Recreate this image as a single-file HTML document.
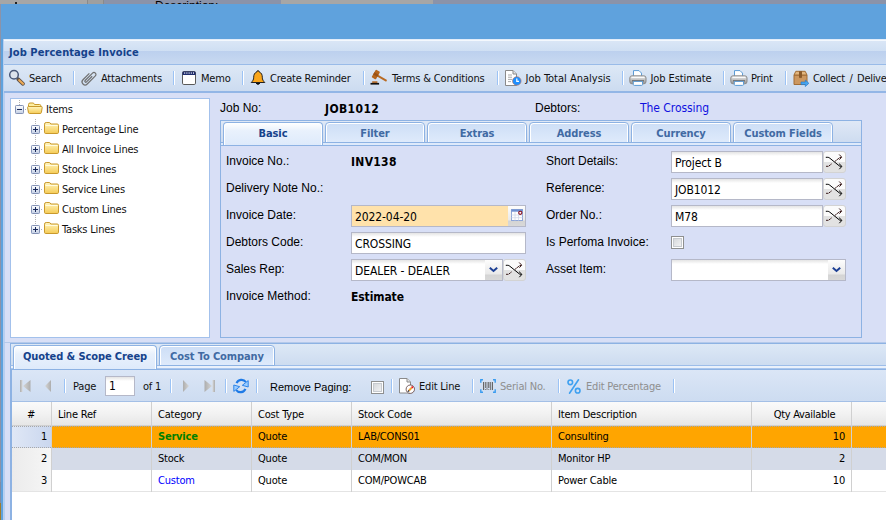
<!DOCTYPE html>
<html><head><meta charset="utf-8"><title>Job Percentage Invoice</title>
<style>
*{box-sizing:border-box;margin:0;padding:0}
html,body{width:886px;height:520px;overflow:hidden}
body{position:relative;background:#5fa2dd;font-family:"DejaVu Sans Condensed","DejaVu Sans",sans-serif;font-size:11px;color:#111;letter-spacing:-0.2px}
div,span,svg{position:absolute;white-space:nowrap}
svg{overflow:visible}
.a{font-family:"Liberation Sans",sans-serif;font-size:12px;letter-spacing:0;line-height:14px;height:14px;color:#000}
.t{line-height:13px;height:13px}
.b{font-weight:bold}
.sep{width:2px;height:14px;border-left:1px solid #9cc3f5;border-right:1px solid #fff;top:71px}
.tab{top:122px;height:21px;width:100px;border:1px solid #8db2e3;border-radius:4px 4px 0 0;background:linear-gradient(#cddef6,#deeafb);box-shadow:inset 1px 1px 0 #fff,inset -1px 0 0 #fff;color:#416aa3;font-weight:bold;text-align:center;line-height:21px;letter-spacing:-0.1px}
.tab.on{height:23px;border-bottom:none;background:linear-gradient(#fff,#e9f1fc 35%,#deeafb);color:#15428b}
.inp{height:22px;border:1px solid #b5b8c8;background:linear-gradient(#e4e4e4,#fff 4px);background-color:#fff;font-size:12px;line-height:22.5px;padding-left:3px;color:#000;letter-spacing:-0.1px}
.trg{width:17px;height:22px;border:1px solid #b5b8c8;border-left:none;background:linear-gradient(#fdfdfd,#e9e9e9 70%,#d4d4d4 75%,#d8d8d8)}
.shf{width:23px;height:22px;border:1px solid #d3d3d3;border-radius:3px;background:linear-gradient(#fbfbfb 50%,#e2e2e2 50%)}
.chk{width:13px;height:13px;border:1px solid #8e8f8f;background:linear-gradient(135deg,#cfd2d6,#f8f8f8);box-shadow:inset 0 0 0 1px #fff,inset 0 0 0 2px #c6cacf}
.hd{top:402px;height:23px;line-height:26px;color:#000}
.cell{height:22px;line-height:23px;color:#000}
</style></head><body>
<svg width="0" height="0" style="left:0;top:0"><defs>
<linearGradient id="gF" x1="0" y1="0" x2="0" y2="1"><stop offset="0" stop-color="#fff6c0"/><stop offset="1" stop-color="#f5cb55"/></linearGradient>
<linearGradient id="gB" x1="0" y1="0" x2="0" y2="1"><stop offset="0" stop-color="#ffffff"/><stop offset="1" stop-color="#c3cfe4"/></linearGradient>
<linearGradient id="gP" x1="0" y1="0" x2="0" y2="1"><stop offset="0" stop-color="#f0f0f0"/><stop offset="1" stop-color="#8f8f8f"/></linearGradient>
<linearGradient id="gN" x1="0" y1="0" x2="1" y2="0"><stop offset="0" stop-color="#adadad"/><stop offset="1" stop-color="#d6d6d6"/></linearGradient>
<linearGradient id="gN2" x1="1" y1="0" x2="0" y2="0"><stop offset="0" stop-color="#adadad"/><stop offset="1" stop-color="#d6d6d6"/></linearGradient>
<linearGradient id="gR" x1="0" y1="0" x2="0" y2="1"><stop offset="0" stop-color="#6ab4ff"/><stop offset="1" stop-color="#1f6fdc"/></linearGradient>
</defs></svg>
<div style="left:0;top:0;width:886px;height:4px;background:#8b93a9;overflow:hidden">
<div style="left:0;top:0;width:87px;height:4px;background:#a6a6a6"></div>
<div style="left:87px;top:0;width:17px;height:4px;background:#9f9f9f;border-left:1px solid #8a8a8a;border-right:1px solid #8a8a8a"></div>
<div style="left:281px;top:0;width:152px;height:4px;background:#a6a6a6"></div>
<div class="a" style="left:155px;top:-1px;color:#000">Description:</div>
<div style="left:15px;top:2px;width:2px;height:2px;background:#222"></div>
</div>
<div style="left:0;top:4px;width:1px;height:516px;background:linear-gradient(#8b93a9 0,#8b93a9 478px,#7f8ca5 478px,#7f8ca5 499px,#a07c2c 499px)"></div>
<div style="left:3px;top:39px;width:890px;height:490px;background:#d8dff6;border-left:2px solid #b9cff0"></div>
<div style="left:4px;top:39px;width:882px;height:25px;background:linear-gradient(#cfe0f5 0,#f4f8fd 1px,#f4f8fd 2px,#dae6f6 2px,#cfdff3 12px,#bcd0ee 12px,#c8d9f1 25px)"></div>
<div style="left:4px;top:64px;width:882px;height:1px;background:#99bbe8"></div>
<div class="t b" style="left:9px;top:46px;color:#15428b;letter-spacing:0.08px">Job Percentage Invoice</div>
<div style="left:4px;top:65px;width:882px;height:28px;background:linear-gradient(#dde8f6,#ccdbf0);border-bottom:2px solid #93b6e6"></div>
<svg style="left:9px;top:70px" width="16" height="16" viewBox="0 0 16 16"><line x1="9.3" y1="9.3" x2="14" y2="13.8" stroke="#5f5248" stroke-width="3.8" stroke-linecap="round"/><line x1="10.2" y1="10.2" x2="14" y2="13.8" stroke="#eeaa55" stroke-width="2.1" stroke-linecap="round"/><circle cx="5" cy="4.8" r="4.3" fill="#dde3ec" stroke="#4a5878" stroke-width="1.5"/></svg><div class="t" style="left:29px;top:72px;">Search</div><div class="sep" style="left:73px;top:71px"></div>
<svg style="left:81px;top:70px" width="16" height="16" viewBox="0 0 16 16"><g transform="rotate(45 8 8)" fill="none" stroke="#707070" stroke-width="1.2"><path d="M5,4.5 v9 a3,3 0 0 0 6,0 v-11.5 a2,2 0 0 0 -4,0 v10.5 a1,1 0 0 0 2,0 v-8"/></g></svg><div class="t" style="left:101px;top:72px;">Attachments</div><div class="sep" style="left:173px;top:71px"></div>
<svg style="left:181px;top:70px" width="16" height="16" viewBox="0 0 16 16"><rect x="1.5" y="1.5" width="13" height="13" rx="1.3" fill="#fff" stroke="#5a5a5a"/><path d="M1.5,2.8 q0,-1.3 1.3,-1.3 h10.4 q1.3,0 1.3,1.3 v2.2 h-13z" fill="#1e2d6e"/><rect x="3.2" y="2.4" width="1" height="1.3" fill="#fff"/><rect x="5.4" y="2.4" width="1" height="1.3" fill="#fff"/><rect x="7.6000000000000005" y="2.4" width="1" height="1.3" fill="#fff"/><rect x="9.8" y="2.4" width="1" height="1.3" fill="#fff"/><rect x="12.0" y="2.4" width="1" height="1.3" fill="#fff"/></svg><div class="t" style="left:201px;top:72px;">Memo</div><div class="sep" style="left:242px;top:71px"></div>
<svg style="left:250px;top:70px" width="16" height="16" viewBox="0 0 16 16"><path d="M6.2,13 a1.9,1.9 0 0 0 3.6,0z" fill="#111" stroke="#111"/><path d="M8,0.7 a1.2,1.2 0 0 1 1.2,1.3 c2.3,0.8 3.1,2.8 3.1,5.2 c0,2.6 1,3.8 2.5,5.3 h-13.6 c1.5,-1.5 2.5,-2.7 2.5,-5.3 c0,-2.4 0.8,-4.4 3.1,-5.2 a1.2,1.2 0 0 1 1.2,-1.3z" fill="#f9a51a" stroke="#222" stroke-width="1" stroke-linejoin="round"/></svg><div class="t" style="left:270px;top:72px;">Create Reminder</div><div class="sep" style="left:363px;top:71px"></div>
<svg style="left:370px;top:70px" width="17" height="16" viewBox="0 0 17 16"><g transform="translate(5.8,4.6) rotate(30)"><rect x="1" y="-0.9" width="11.5" height="1.9" fill="#b86a22"/><rect x="-2.4" y="-4.4" width="4.8" height="8.8" rx="0.8" fill="#b5651d"/><rect x="-2.4" y="-1.2" width="4.8" height="2.4" fill="#9a5216"/></g><rect x="2.2" y="11.3" width="5.2" height="1.6" fill="#b5651d"/><rect x="0.5" y="12.9" width="8.6" height="1.7" fill="#111"/></svg><div class="t" style="left:392px;top:72px;letter-spacing:-0.15px">Terms &amp; Conditions</div><div class="sep" style="left:497px;top:71px"></div>
<svg style="left:505px;top:70px" width="17" height="16" viewBox="0 0 17 16"><path d="M0.5,0.5 h7.5 l3.5,3.5 v11.5 h-11z" fill="#fff" stroke="#8a8a8a"/><path d="M8,0.5 v3.5 h3.5" fill="#e4e4e4" stroke="#8a8a8a"/><rect x="3" y="4.5" width="4" height="1" fill="#aaa"/><rect x="3" y="6.7" width="4" height="1" fill="#aaa"/><rect x="3" y="8.9" width="4" height="1" fill="#aaa"/><rect x="3" y="11.100000000000001" width="3" height="1" fill="#aaa"/><circle cx="11.8" cy="11" r="4.3" fill="#1e8fff" stroke="#b8705a" stroke-width="0.6"/><path d="M11.8,8.6 v2.8 h2.2" fill="none" stroke="#fff" stroke-width="1.2"/></svg><div class="t" style="left:525.5px;top:72px;letter-spacing:0">Job Total Analysis</div><div class="sep" style="left:622px;top:71px"></div>
<svg style="left:629px;top:70px" width="18" height="16" viewBox="0 0 18 16"><path d="M4.5,0.6 h5.5 l2.5,2.5 v5 h-8z" fill="#fff" stroke="#5b9bd5"/><rect x="0.8" y="5.8" width="16.2" height="8" rx="2.2" fill="url(#gP)" stroke="#8a8a8a"/><rect x="2.5" y="7" width="13" height="1" fill="#fafafa"/><rect x="3" y="10.3" width="12" height="1.1" fill="#5a5a5a"/><path d="M4.3,11.4 h9.2 v3 q0,1 -1,1 h-7.2 q-1,0 -1,-1z" fill="#fff" stroke="#5b9bd5"/></svg><div class="t" style="left:650.5px;top:72px;letter-spacing:-0.1px">Job Estimate</div><div class="sep" style="left:723px;top:71px"></div>
<svg style="left:730px;top:70px" width="18" height="16" viewBox="0 0 18 16"><path d="M4.5,0.6 h5.5 l2.5,2.5 v5 h-8z" fill="#fff" stroke="#5b9bd5"/><rect x="0.8" y="5.8" width="16.2" height="8" rx="2.2" fill="url(#gP)" stroke="#8a8a8a"/><rect x="2.5" y="7" width="13" height="1" fill="#fafafa"/><rect x="3" y="10.3" width="12" height="1.1" fill="#5a5a5a"/><path d="M4.3,11.4 h9.2 v3 q0,1 -1,1 h-7.2 q-1,0 -1,-1z" fill="#fff" stroke="#5b9bd5"/></svg><div class="t" style="left:751px;top:72px;">Print</div><div class="sep" style="left:785px;top:71px"></div>
<svg style="left:793px;top:70px" width="16" height="16" viewBox="0 0 16 16"><path d="M1,5 h13 v9.5 h-13z" fill="#cc975f" stroke="#a26d35"/><path d="M1,5 l1.8,-3.7 h9.4 l1.8,3.7z" fill="#e2b67f" stroke="#a26d35"/><path d="M6,1.3 h3 v7 l-0.8,-0.8 l-0.7,0.8 l-0.7,-0.8 l-0.8,0.8z" fill="#8a5a2a"/><path d="M8,12 h4.3 v-2 l3.6,3.3 l-3.6,3.3 v-2 h-4.3z" fill="#45a5f0" stroke="#1f74c8" stroke-width="0.6"/></svg><div class="t" style="left:813px;top:72px;letter-spacing:-0.3px;word-spacing:1.8px">Collect / Deliver</div>
<div style="left:10px;top:98px;width:200px;height:240px;background:#fff;border:1px solid #a3c1ec"></div>
<div style="left:19px;top:99px;width:1px;height:6px;background:repeating-linear-gradient(#fff 0,#fff 1px,#b4b4b4 1px,#b4b4b4 2px)"></div>
<div style="left:35px;top:119px;width:1px;height:110px;background:repeating-linear-gradient(#b4b4b4 0,#b4b4b4 1px,#fff 1px,#fff 2px)"></div>
<div style="left:25px;top:109px;width:1px;height:1px;background:#b4b4b4"></div>
<svg style="left:15px;top:105px" width="9" height="9" viewBox="0 0 9 9"><rect x="0.5" y="0.5" width="8" height="8" rx="0.8" fill="url(#gB)" stroke="#8492b5"/><rect x="2" y="4" width="5" height="1" fill="#1a2a5a"/></svg><svg style="left:27px;top:102px" width="16" height="12" viewBox="0 0 16 12"><path d="M1.5,10.5 v-8 q0,-1.5 1.5,-1.5 h3 q1,0 1.5,1.5 h5 q1.3,0 1.3,1.3 v1.2" fill="#fdeea0" stroke="#c9992c"/><path d="M0.6,5.5 q0,-1 1,-1 h12.6 q1.2,0 1,1 l-0.8,5 q-0.2,1 -1.2,1 h-10.6 q-1,0 -1.2,-1z" fill="url(#gF)" stroke="#c9992c"/></svg><div class="t" style="left:46px;top:103px;">Items</div>
<div style="left:41px;top:129px;width:1px;height:1px;background:#b4b4b4"></div>
<svg style="left:31px;top:125px" width="9" height="9" viewBox="0 0 9 9"><rect x="0.5" y="0.5" width="8" height="8" rx="0.8" fill="url(#gB)" stroke="#8492b5"/><rect x="2" y="4" width="5" height="1" fill="#1a2a5a"/><rect x="4" y="2" width="1" height="5" fill="#1a2a5a"/></svg><svg style="left:44px;top:122px" width="15" height="12" viewBox="0 0 15 12"><path d="M0.5,2.2 q0,-1.7 1.7,-1.7 h3 q1,0 1.6,1.5 h6.4 q1.3,0 1.3,1.3 v7 q0,1.2 -1.2,1.2 h-11.6 q-1.2,0 -1.2,-1.2z" fill="url(#gF)" stroke="#c9992c"/><path d="M1.5,3.5 h12" stroke="#fffbe0" stroke-width="1"/></svg><div class="t" style="left:62px;top:123px;">Percentage Line</div>
<div style="left:41px;top:149px;width:1px;height:1px;background:#b4b4b4"></div>
<svg style="left:31px;top:145px" width="9" height="9" viewBox="0 0 9 9"><rect x="0.5" y="0.5" width="8" height="8" rx="0.8" fill="url(#gB)" stroke="#8492b5"/><rect x="2" y="4" width="5" height="1" fill="#1a2a5a"/><rect x="4" y="2" width="1" height="5" fill="#1a2a5a"/></svg><svg style="left:44px;top:142px" width="15" height="12" viewBox="0 0 15 12"><path d="M0.5,2.2 q0,-1.7 1.7,-1.7 h3 q1,0 1.6,1.5 h6.4 q1.3,0 1.3,1.3 v7 q0,1.2 -1.2,1.2 h-11.6 q-1.2,0 -1.2,-1.2z" fill="url(#gF)" stroke="#c9992c"/><path d="M1.5,3.5 h12" stroke="#fffbe0" stroke-width="1"/></svg><div class="t" style="left:62px;top:143px;">All Invoice Lines</div>
<div style="left:41px;top:169px;width:1px;height:1px;background:#b4b4b4"></div>
<svg style="left:31px;top:165px" width="9" height="9" viewBox="0 0 9 9"><rect x="0.5" y="0.5" width="8" height="8" rx="0.8" fill="url(#gB)" stroke="#8492b5"/><rect x="2" y="4" width="5" height="1" fill="#1a2a5a"/><rect x="4" y="2" width="1" height="5" fill="#1a2a5a"/></svg><svg style="left:44px;top:162px" width="15" height="12" viewBox="0 0 15 12"><path d="M0.5,2.2 q0,-1.7 1.7,-1.7 h3 q1,0 1.6,1.5 h6.4 q1.3,0 1.3,1.3 v7 q0,1.2 -1.2,1.2 h-11.6 q-1.2,0 -1.2,-1.2z" fill="url(#gF)" stroke="#c9992c"/><path d="M1.5,3.5 h12" stroke="#fffbe0" stroke-width="1"/></svg><div class="t" style="left:62px;top:163px;">Stock Lines</div>
<div style="left:41px;top:189px;width:1px;height:1px;background:#b4b4b4"></div>
<svg style="left:31px;top:185px" width="9" height="9" viewBox="0 0 9 9"><rect x="0.5" y="0.5" width="8" height="8" rx="0.8" fill="url(#gB)" stroke="#8492b5"/><rect x="2" y="4" width="5" height="1" fill="#1a2a5a"/><rect x="4" y="2" width="1" height="5" fill="#1a2a5a"/></svg><svg style="left:44px;top:182px" width="15" height="12" viewBox="0 0 15 12"><path d="M0.5,2.2 q0,-1.7 1.7,-1.7 h3 q1,0 1.6,1.5 h6.4 q1.3,0 1.3,1.3 v7 q0,1.2 -1.2,1.2 h-11.6 q-1.2,0 -1.2,-1.2z" fill="url(#gF)" stroke="#c9992c"/><path d="M1.5,3.5 h12" stroke="#fffbe0" stroke-width="1"/></svg><div class="t" style="left:62px;top:183px;">Service Lines</div>
<div style="left:41px;top:209px;width:1px;height:1px;background:#b4b4b4"></div>
<svg style="left:31px;top:205px" width="9" height="9" viewBox="0 0 9 9"><rect x="0.5" y="0.5" width="8" height="8" rx="0.8" fill="url(#gB)" stroke="#8492b5"/><rect x="2" y="4" width="5" height="1" fill="#1a2a5a"/><rect x="4" y="2" width="1" height="5" fill="#1a2a5a"/></svg><svg style="left:44px;top:202px" width="15" height="12" viewBox="0 0 15 12"><path d="M0.5,2.2 q0,-1.7 1.7,-1.7 h3 q1,0 1.6,1.5 h6.4 q1.3,0 1.3,1.3 v7 q0,1.2 -1.2,1.2 h-11.6 q-1.2,0 -1.2,-1.2z" fill="url(#gF)" stroke="#c9992c"/><path d="M1.5,3.5 h12" stroke="#fffbe0" stroke-width="1"/></svg><div class="t" style="left:62px;top:203px;">Custom Lines</div>
<div style="left:41px;top:229px;width:1px;height:1px;background:#b4b4b4"></div>
<svg style="left:31px;top:225px" width="9" height="9" viewBox="0 0 9 9"><rect x="0.5" y="0.5" width="8" height="8" rx="0.8" fill="url(#gB)" stroke="#8492b5"/><rect x="2" y="4" width="5" height="1" fill="#1a2a5a"/><rect x="4" y="2" width="1" height="5" fill="#1a2a5a"/></svg><svg style="left:44px;top:222px" width="15" height="12" viewBox="0 0 15 12"><path d="M0.5,2.2 q0,-1.7 1.7,-1.7 h3 q1,0 1.6,1.5 h6.4 q1.3,0 1.3,1.3 v7 q0,1.2 -1.2,1.2 h-11.6 q-1.2,0 -1.2,-1.2z" fill="url(#gF)" stroke="#c9992c"/><path d="M1.5,3.5 h12" stroke="#fffbe0" stroke-width="1"/></svg><div class="t" style="left:62px;top:223px;">Tasks Lines</div>
<div class="a" style="left:220px;top:101px;">Job No:</div>
<div class="t b" style="left:325px;top:103px;font-size:12px;letter-spacing:0.4px;color:#000">JOB1012</div>
<div class="a" style="left:535px;top:101px;">Debtors:</div>
<div class="t" style="left:640px;top:102px;font-size:12px;color:#1010e0;letter-spacing:-0.05px">The Crossing</div>
<div style="left:220px;top:120px;width:642px;height:23px;background:linear-gradient(#dfe8f6,#cedcf0);border:1px solid #8db2e3"></div>
<div style="left:220px;top:143px;width:642px;height:2px;background:#deeafb;border:1px solid #8db2e3;border-top:none;border-bottom:none"></div>
<div style="left:220px;top:145px;width:642px;height:193px;border:1px solid #8db2e3"></div>
<div class="tab on" style="left:223px">Basic</div>
<div class="tab" style="left:325px">Filter</div>
<div class="tab" style="left:427px">Extras</div>
<div class="tab" style="left:529px">Address</div>
<div class="tab" style="left:631px">Currency</div>
<div class="tab" style="left:733px">Custom Fields</div>
<div class="a" style="left:226px;top:154px;">Invoice No.:</div>
<div class="a" style="left:226px;top:181px;">Delivery Note No.:</div>
<div class="a" style="left:226px;top:208px;">Invoice Date:</div>
<div class="a" style="left:226px;top:235px;">Debtors Code:</div>
<div class="a" style="left:226px;top:262px;">Sales Rep:</div>
<div class="a" style="left:226px;top:289px;">Invoice Method:</div>
<div class="t b" style="left:351px;top:156px;font-size:12px;letter-spacing:0.3px;color:#000">INV138</div>
<div class="t b" style="left:351px;top:291px;font-size:12px;letter-spacing:-0.1px;color:#000">Estimate</div>
<div class="inp" style="left:351px;top:205px;width:158px;background:#ffe2ab">2022-04-20</div>
<div class="trg" style="left:508px;top:205px;width:18px"></div><svg style="left:511px;top:209px" width="12" height="12" viewBox="0 0 12 12"><rect x="0.5" y="0.5" width="11" height="11" fill="#fff" stroke="#8ea6d8"/><rect x="0.5" y="0.5" width="11" height="2.2" fill="#6f8fd0"/><path d="M0.5,6 h11 M0.5,8.7 h11 M4,3 v8.5 M7.5,3 v8.5" stroke="#d0d8ea" stroke-width="0.8" fill="none"/><circle cx="9.3" cy="3.8" r="1.6" fill="#fff" stroke="#8a1020" stroke-width="1.1"/></svg>
<div class="inp" style="left:351px;top:232px;width:175px">CROSSING</div>
<div class="inp" style="left:351px;top:259px;width:135px">DEALER - DEALER</div>
<div class="trg" style="left:485px;top:259px;width:18px"></div><svg style="left:489px;top:267px" width="9" height="6" viewBox="0 0 9 6"><path d="M0.8,0.8 l3.7,3.2 l3.7,-3.2" fill="none" stroke="#1c3f94" stroke-width="2" stroke-linejoin="miter"/></svg>
<div class="shf" style="left:503px;top:259px"></div><svg style="left:503px;top:259px" width="22" height="21" viewBox="0 0 22 21"><g transform="translate(0.5,0.5)"><path d="M2.5,14.8 h2.5 l3.2,-2.5 M11.3,10 l5,-4 h1.4" fill="none" stroke="#3a1a1a" stroke-width="1" stroke-dasharray="2.4 0.5"/><path d="M15.7,3 L18.2,5.6 L15.9,8.2" fill="none" stroke="#3a1a1a" stroke-width="1"/><path d="M2.3,5.8 h2 q1,0 2,0.9 l9.3,7.5 q0.8,0.7 1.6,0.7 h0.8" fill="none" stroke="#000" stroke-width="1"/><path d="M15.6,12.2 L18.4,14.9 L15.8,17.7" fill="none" stroke="#000" stroke-width="1"/></g></svg>
<div class="a" style="left:546px;top:154px;">Short Details:</div>
<div class="a" style="left:546px;top:181px;">Reference:</div>
<div class="a" style="left:546px;top:208px;">Order No.:</div>
<div class="a" style="left:546px;top:235px;">Is Perfoma Invoice:</div>
<div class="a" style="left:546px;top:262px;">Asset Item:</div>
<div class="inp" style="left:671px;top:151px;width:152px">Project B</div>
<div class="shf" style="left:823px;top:151px"></div><svg style="left:823px;top:151px" width="22" height="21" viewBox="0 0 22 21"><g transform="translate(0.5,0.5)"><path d="M2.5,14.8 h2.5 l3.2,-2.5 M11.3,10 l5,-4 h1.4" fill="none" stroke="#3a1a1a" stroke-width="1" stroke-dasharray="2.4 0.5"/><path d="M15.7,3 L18.2,5.6 L15.9,8.2" fill="none" stroke="#3a1a1a" stroke-width="1"/><path d="M2.3,5.8 h2 q1,0 2,0.9 l9.3,7.5 q0.8,0.7 1.6,0.7 h0.8" fill="none" stroke="#000" stroke-width="1"/><path d="M15.6,12.2 L18.4,14.9 L15.8,17.7" fill="none" stroke="#000" stroke-width="1"/></g></svg>
<div class="inp" style="left:671px;top:178px;width:152px">JOB1012</div>
<div class="shf" style="left:823px;top:178px"></div><svg style="left:823px;top:178px" width="22" height="21" viewBox="0 0 22 21"><g transform="translate(0.5,0.5)"><path d="M2.5,14.8 h2.5 l3.2,-2.5 M11.3,10 l5,-4 h1.4" fill="none" stroke="#3a1a1a" stroke-width="1" stroke-dasharray="2.4 0.5"/><path d="M15.7,3 L18.2,5.6 L15.9,8.2" fill="none" stroke="#3a1a1a" stroke-width="1"/><path d="M2.3,5.8 h2 q1,0 2,0.9 l9.3,7.5 q0.8,0.7 1.6,0.7 h0.8" fill="none" stroke="#000" stroke-width="1"/><path d="M15.6,12.2 L18.4,14.9 L15.8,17.7" fill="none" stroke="#000" stroke-width="1"/></g></svg>
<div class="inp" style="left:671px;top:205px;width:152px">M78</div>
<div class="shf" style="left:823px;top:205px"></div><svg style="left:823px;top:205px" width="22" height="21" viewBox="0 0 22 21"><g transform="translate(0.5,0.5)"><path d="M2.5,14.8 h2.5 l3.2,-2.5 M11.3,10 l5,-4 h1.4" fill="none" stroke="#3a1a1a" stroke-width="1" stroke-dasharray="2.4 0.5"/><path d="M15.7,3 L18.2,5.6 L15.9,8.2" fill="none" stroke="#3a1a1a" stroke-width="1"/><path d="M2.3,5.8 h2 q1,0 2,0.9 l9.3,7.5 q0.8,0.7 1.6,0.7 h0.8" fill="none" stroke="#000" stroke-width="1"/><path d="M15.6,12.2 L18.4,14.9 L15.8,17.7" fill="none" stroke="#000" stroke-width="1"/></g></svg>
<div class="chk" style="left:671px;top:236px"></div>
<div class="inp" style="left:671px;top:259px;width:158px"></div>
<div class="trg" style="left:828px;top:259px;width:18px"></div><svg style="left:832px;top:267px" width="9" height="6" viewBox="0 0 9 6"><path d="M0.8,0.8 l3.7,3.2 l3.7,-3.2" fill="none" stroke="#1c3f94" stroke-width="2" stroke-linejoin="miter"/></svg>
<div style="left:4px;top:342px;width:882px;height:1px;background:#b4c9ea"></div>
<div style="left:10px;top:343px;width:880px;height:23px;background:linear-gradient(#dde8f6,#cddcf0);border:1px solid #8db2e3;border-bottom-color:#9dbde9"></div>
<div style="left:10px;top:366px;width:880px;height:4px;background:linear-gradient(#eaf1fb 0,#eaf1fb 2px,#a9c6ee 2px,#a9c6ee 3px,#8db2e3 3px);border-left:1px solid #8db2e3"></div>
<div class="tab on" style="left:13px;top:345px;width:144px;height:24px">Quoted &amp; Scope Creep</div>
<div class="tab" style="left:159px;top:345px;width:116px">Cost To Company</div>
<div style="left:11px;top:370px;width:880px;height:32px;background:linear-gradient(#dbe6f6,#cddcf1);border-bottom:1px solid #a3bfe6"></div>
<svg style="left:20px;top:380px" width="11" height="12" viewBox="0 0 11 12"><rect x="0" y="0" width="2.5" height="12" fill="url(#gN)"/><path d="M10.5,0 v12 l-7.5,-6z" fill="url(#gN2)"/></svg><svg style="left:45px;top:380px" width="6" height="12" viewBox="0 0 6 12"><path d="M6,0 v12 l-6,-6z" fill="url(#gN2)"/></svg><div class="sep" style="left:64px;top:379px"></div><div class="t" style="left:73px;top:380px;">Page</div>
<div class="inp" style="left:105px;top:376px;width:30px;height:20px;line-height:18px">1</div>
<div class="t" style="left:143px;top:380px;">of 1</div><div class="sep" style="left:170px;top:379px"></div><svg style="left:183px;top:380px" width="6" height="12" viewBox="0 0 6 12"><path d="M0,0 v12 l6,-6z" fill="url(#gN)"/></svg><svg style="left:204px;top:380px" width="11" height="12" viewBox="0 0 11 12"><rect x="8.5" y="0" width="2.5" height="12" fill="url(#gN2)"/><path d="M0.5,0 v12 l7.5,-6z" fill="url(#gN)"/></svg><div class="sep" style="left:225px;top:379px"></div><svg style="left:233px;top:378px" width="16" height="16" viewBox="0 0 16 16"><path d="M3.6,5.2 C5,1.2 10.5,0.6 12.8,4" fill="none" stroke="#1e7ae6" stroke-width="2.2"/><path d="M9.3,7.3 L15.2,2.6 L15.2,9z" fill="#9ccdff" stroke="#1e7ae6" stroke-width="0.9" stroke-linejoin="round"/><path d="M12.4,10.8 C11,14.8 5.5,15.4 3.2,12" fill="none" stroke="#1e7ae6" stroke-width="2.2"/><path d="M6.7,8.7 L0.8,7 L0.8,13.4z" fill="#9ccdff" stroke="#1e7ae6" stroke-width="0.9" stroke-linejoin="round"/></svg><div class="sep" style="left:256px;top:379px"></div>
<div class="a" style="left:270px;top:380px;font-size:11px">Remove Paging:</div>
<div class="chk" style="left:371px;top:381px"></div>
<div class="sep" style="left:391px;top:379px"></div><svg style="left:399px;top:378px" width="16" height="16" viewBox="0 0 16 16"><path d="M0.5,0.5 h7.5 l3.5,3.5 v11 h-11z" fill="#fff" stroke="#8a8a8a"/><path d="M8,0.5 v3.5 h3.5" fill="#e4e4e4" stroke="#8a8a8a"/><circle cx="11.3" cy="11.2" r="4.2" fill="#fff" stroke="#5a3a3a" stroke-width="0.8"/><g transform="translate(11.3,11.2) rotate(-45)"><rect x="-2" y="-1" width="4" height="2" fill="#f0a030"/><rect x="2" y="-1" width="1.6" height="2" fill="#e81020"/><path d="M-2,-1 l-1.8,1 l1.8,1z" fill="#111"/></g></svg><div class="t" style="left:419px;top:380px;">Edit Line</div><div class="sep" style="left:472px;top:379px"></div>
<svg style="left:480px;top:379px" width="16" height="14" viewBox="0 0 16 14"><path d="M3,0.8 h-2.2 v3 M13,0.8 h2.2 v3 M3,13.2 h-2.2 v-3 M13,13.2 h2.2 v-3" fill="none" stroke="#3a9cf0" stroke-width="1.4"/><rect x="3" y="3" width="1.2" height="8" fill="#666"/><rect x="5" y="3" width="0.8" height="6" fill="#666"/><rect x="6.6" y="3" width="0.8" height="8" fill="#666"/><rect x="8.2" y="3" width="1.2" height="6" fill="#666"/><rect x="10.2" y="3" width="0.8" height="8" fill="#666"/><rect x="11.8" y="3" width="1.2" height="8" fill="#666"/><rect x="5" y="10" width="0.8" height="1" fill="#666"/><rect x="8.4" y="10" width="0.8" height="1" fill="#666"/></svg><div class="t" style="left:500px;top:380px;color:#8f8f8f">Serial No.</div><div class="sep" style="left:558px;top:379px"></div>
<svg style="left:567px;top:378.5px" width="14" height="15" viewBox="0 0 14 15"><line x1="11.5" y1="0.8" x2="2.5" y2="14.2" stroke="#3ea0f0" stroke-width="1.6" stroke-linecap="round"/><circle cx="3.3" cy="3.3" r="2.3" fill="none" stroke="#3ea0f0" stroke-width="1.6"/><circle cx="10.7" cy="11.7" r="2.3" fill="none" stroke="#3ea0f0" stroke-width="1.6"/></svg><div class="t" style="left:586px;top:380px;color:#8f8f8f">Edit Percentage</div><div class="sep" style="left:673px;top:379px"></div>
<div style="left:10px;top:370px;width:2px;height:160px;background:#8db2e3;z-index:5"></div>
<div style="left:11px;top:402px;width:880px;height:24px;background:linear-gradient(#fafafa,#f2f2f2 50%,#e6e6e6);border-bottom:1px solid #d0d0d0"></div>
<div style="left:11px;top:426px;width:880px;height:100px;background:#fff"></div>
<div style="left:11px;top:448px;width:880px;height:22px;background:#d5dbe8"></div>
<div style="left:11px;top:470px;width:880px;height:22px;background:#fff;border-bottom:1px solid #e4e4e4"></div>
<div style="left:11px;top:426px;width:41px;height:22px;background:linear-gradient(90deg,#e0e8f6,#c9d6ee)"></div>
<div style="left:11px;top:448px;width:41px;height:22px;background:linear-gradient(90deg,#ebebeb,#f6f6f6)"></div>
<div style="left:11px;top:470px;width:41px;height:21px;background:linear-gradient(90deg,#ebebeb,#f6f6f6)"></div>
<div style="left:52px;top:426px;width:840px;height:22px;background:#ffa500"></div>
<div style="left:11px;top:426px;width:880px;height:22px;border-top:1px dotted #a8a8a8;border-bottom:1px dotted #a8a8a8"></div>
<div style="left:51px;top:402px;width:1px;height:90px;background:#d0d0d0"></div>
<div style="left:151px;top:402px;width:1px;height:90px;background:#d0d0d0"></div>
<div style="left:251px;top:402px;width:1px;height:90px;background:#d0d0d0"></div>
<div style="left:351px;top:402px;width:1px;height:90px;background:#d0d0d0"></div>
<div style="left:551px;top:402px;width:1px;height:90px;background:#d0d0d0"></div>
<div style="left:751px;top:402px;width:1px;height:90px;background:#d0d0d0"></div>
<div style="left:851px;top:402px;width:1px;height:90px;background:#d0d0d0"></div>
<div class="t hd" style="left:11px;width:40px;text-align:center">#</div>
<div class="t hd" style="left:58px">Line Ref</div>
<div class="t hd" style="left:158px">Category</div>
<div class="t hd" style="left:258px">Cost Type</div>
<div class="t hd" style="left:358px">Stock Code</div>
<div class="t hd" style="left:558px">Item Description</div>
<div class="t hd" style="left:751px;width:107px;text-align:center;letter-spacing:-0.3px">Qty Available</div>
<div class="t cell" style="left:11px;top:425px;width:36px;text-align:right">1</div>
<div class="t cell" style="left:158px;top:425px"><span style="position:static;color:#008000;font-weight:bold">Service</span></div>
<div class="t cell" style="left:258px;top:425px">Quote</div>
<div class="t cell" style="left:358px;top:425px">LAB/CONS01</div>
<div class="t cell" style="left:558px;top:425px">Consulting</div>
<div class="t cell" style="left:751px;top:425px;width:94px;text-align:right">10</div>
<div class="t cell" style="left:11px;top:447px;width:36px;text-align:right">2</div>
<div class="t cell" style="left:158px;top:447px">Stock</div>
<div class="t cell" style="left:258px;top:447px">Quote</div>
<div class="t cell" style="left:358px;top:447px">COM/MON</div>
<div class="t cell" style="left:558px;top:447px">Monitor HP</div>
<div class="t cell" style="left:751px;top:447px;width:94px;text-align:right">2</div>
<div class="t cell" style="left:11px;top:469px;width:36px;text-align:right">3</div>
<div class="t cell" style="left:158px;top:469px"><span style="position:static;color:#0000ff">Custom</span></div>
<div class="t cell" style="left:258px;top:469px">Quote</div>
<div class="t cell" style="left:358px;top:469px">COM/POWCAB</div>
<div class="t cell" style="left:558px;top:469px">Power Cable</div>
<div class="t cell" style="left:751px;top:469px;width:94px;text-align:right">10</div>
</body></html>
